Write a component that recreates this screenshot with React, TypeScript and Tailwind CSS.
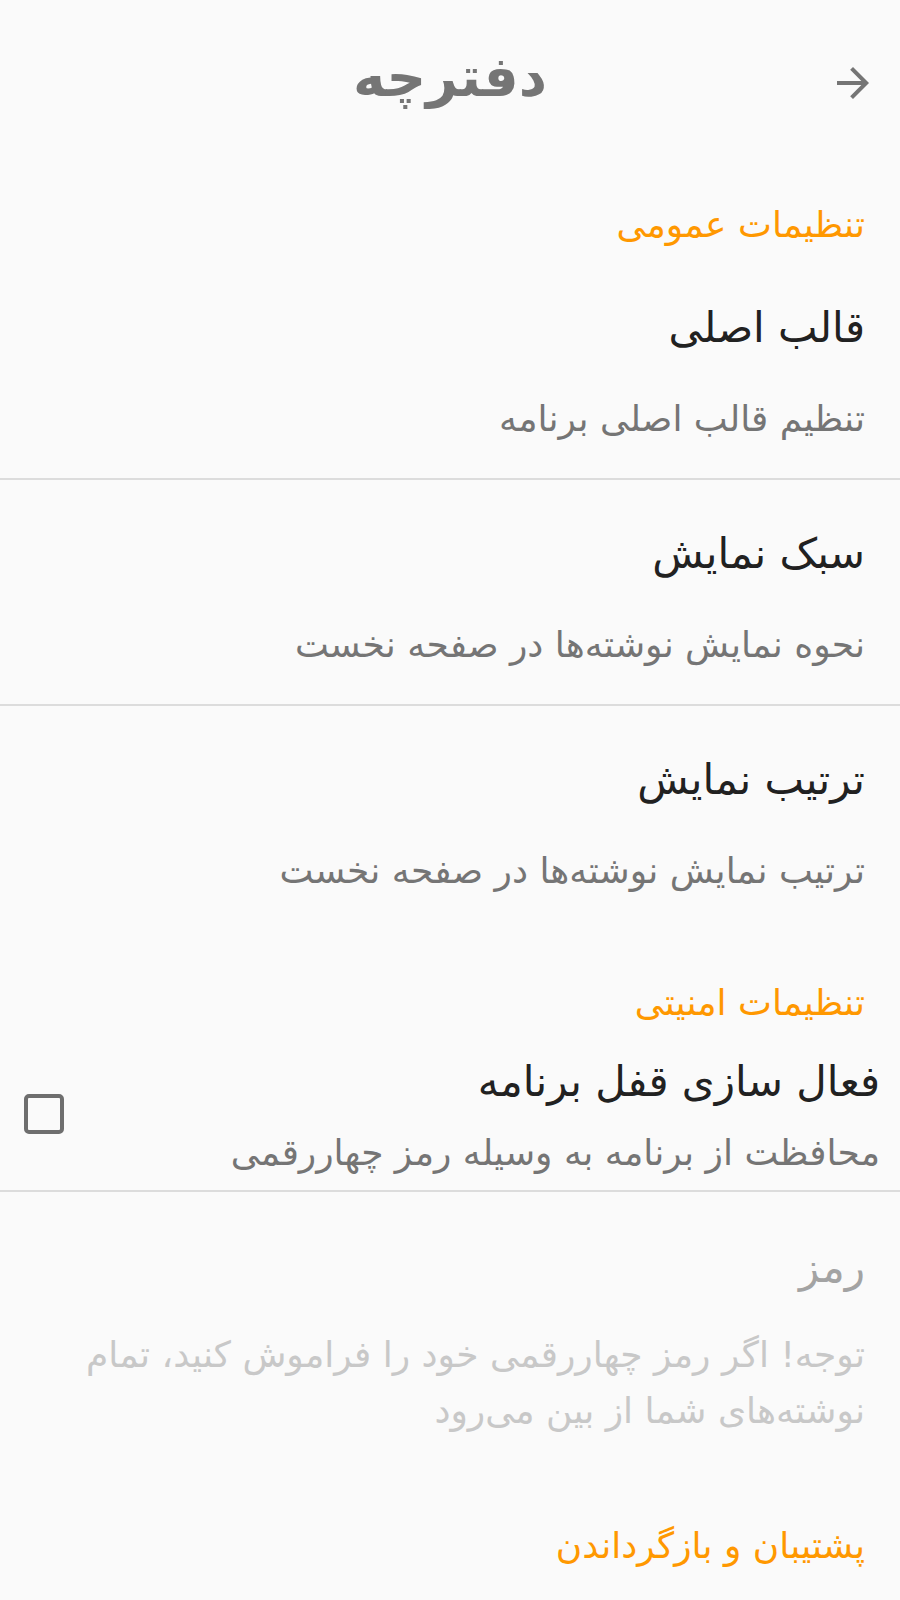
import React from 'react'

const font = { fontFamily: '"DejaVu Sans", sans-serif' }

function Category({ label }: { label: string }) {
  return (
    <div className="h-[100px] flex items-end pb-[9px] pr-[35px]">
      <div className="h-[40px] leading-[40px] text-[36px] text-[#ff9800]">{label}</div>
    </div>
  )
}

function Item({ title, summary, divider = true }: { title: string; summary: string; divider?: boolean }) {
  return (
    <div className={`h-[226px] pr-[35px] pt-[50px] ${divider ? 'border-b-2 border-[#dcdcdc]' : ''}`}>
      <div className="h-[48px] leading-[48px] text-[42px] text-[#212121]">{title}</div>
      <div className="mt-[43px] h-[48px] leading-[48px] text-[36px] text-[#757575]">{summary}</div>
    </div>
  )
}

export default function App() {
  return (
    <div dir="rtl" style={font} className="w-[900px] h-[1600px] bg-[#fafafa] overflow-hidden">
      {/* toolbar */}
      <div className="relative h-[154px] flex items-center justify-center">
        <h1 className="text-[55px] font-bold text-[#757575] leading-none">دفترچه</h1>
        <button className="absolute right-[23px] top-[59px] text-[#757575]">
          <svg width="48" height="48" viewBox="0 0 24 24" fill="currentColor">
            <path d="M12 4l-1.41 1.41L16.17 11H4v2h12.17l-5.58 5.59L12 20l8-8z" />
          </svg>
        </button>
      </div>

      <Category label="تنظیمات عمومی" />
      <Item title="قالب اصلی" summary="تنظیم قالب اصلی برنامه" />
      <Item title="سبک نمایش" summary="نحوه نمایش نوشته‌ها در صفحه نخست" />
      <Item title="ترتیب نمایش" summary="ترتیب نمایش نوشته‌ها در صفحه نخست" divider={false} />

      <Category label="تنظیمات امنیتی" />
      <div className="h-[160px] border-b-2 border-[#dcdcdc] flex items-start pr-[20px] pl-[24px]">
        <div className="flex-1 pt-[26px]">
          <div className="h-[48px] leading-[48px] text-[42px] text-[#212121]">فعال سازی قفل برنامه</div>
          <div className="mt-[23px] h-[48px] leading-[48px] text-[36px] text-[#757575]">محافظت از برنامه به وسیله رمز چهاررقمی</div>
        </div>
        <div className="mt-[62px] w-[40px] h-[40px] border-4 border-[#6e6e6e] rounded-[5px]" />
      </div>

      <div className="h-[283px] pr-[35px] pl-[35px] pt-[52px]">
        <div className="h-[48px] leading-[48px] text-[42px] text-[#a3a3a3]">رمز</div>
        <div className="mt-[35px] leading-[56px] text-[36px] text-[#c8c8c8]">
          توجه! اگر رمز چهاررقمی خود را فراموش کنید، تمام نوشته‌های شما از بین می‌رود
        </div>
      </div>

      <Category label="پشتیبان و بازگرداندن" />
    </div>
  )
}
